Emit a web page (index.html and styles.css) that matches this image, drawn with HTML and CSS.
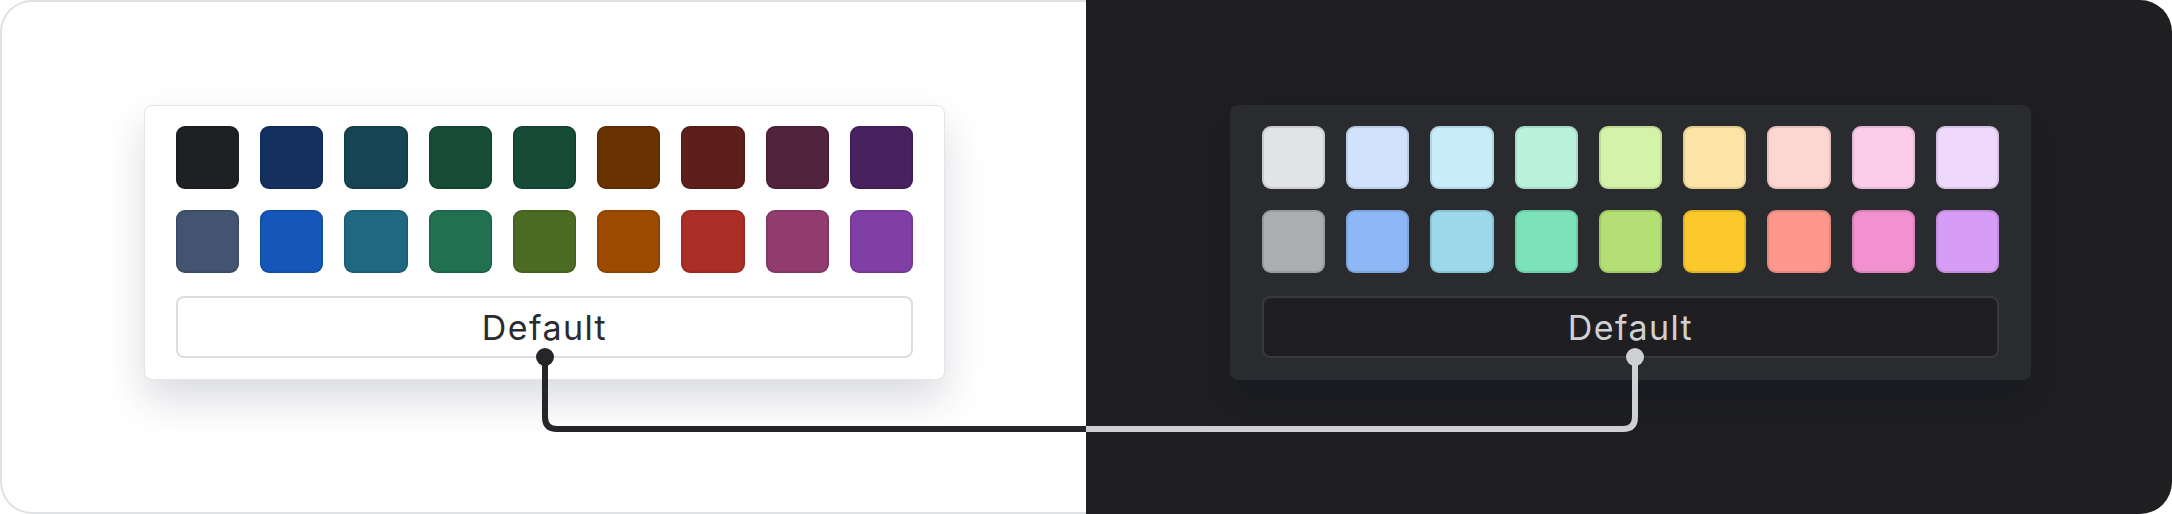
FILE: index.html
```html
<!DOCTYPE html>
<html lang="en">
<head>
    <meta charset="UTF-8">
    <meta name="viewport" content="width=device-width, initial-scale=1.0">
    <title>Color Picker - Themes</title>
    <link rel="stylesheet" href="styles.css">
</head>
<body>
    <div class="showcase">
        <!-- Light theme -->
        <div class="pane pane-light">
            <div class="picker">
                <div class="swatches">
                    <span class="swatch" style="background:#1f2023"></span>
                    <span class="swatch" style="background:#13305f"></span>
                    <span class="swatch" style="background:#164452"></span>
                    <span class="swatch" style="background:#174c36"></span>
                    <span class="swatch" style="background:#154b37"></span>
                    <span class="swatch" style="background:#6a3200"></span>
                    <span class="swatch" style="background:#5e1f1c"></span>
                    <span class="swatch" style="background:#52233f"></span>
                    <span class="swatch" style="background:#48225f"></span>

                    <span class="swatch" style="background:#435470"></span>
                    <span class="swatch" style="background:#1557b8"></span>
                    <span class="swatch" style="background:#206780"></span>
                    <span class="swatch" style="background:#217050"></span>
                    <span class="swatch" style="background:#4b6b22"></span>
                    <span class="swatch" style="background:#9c4a00"></span>
                    <span class="swatch" style="background:#aa2e25"></span>
                    <span class="swatch" style="background:#913b6f"></span>
                    <span class="swatch" style="background:#7f3fa5"></span>
                </div>
                <button class="default-btn">Default</button>
            </div>
        </div>

        <!-- Dark theme -->
        <div class="pane pane-dark">
            <div class="picker">
                <div class="swatches">
                    <span class="swatch" style="background:#e2e3e5"></span>
                    <span class="swatch" style="background:#d1e2fd"></span>
                    <span class="swatch" style="background:#c7ecfa"></span>
                    <span class="swatch" style="background:#baf2db"></span>
                    <span class="swatch" style="background:#d4f2a8"></span>
                    <span class="swatch" style="background:#fbe4a5"></span>
                    <span class="swatch" style="background:#fdd6d2"></span>
                    <span class="swatch" style="background:#fccdeb"></span>
                    <span class="swatch" style="background:#eed8fc"></span>

                    <span class="swatch" style="background:#abadb1"></span>
                    <span class="swatch" style="background:#8db8f5"></span>
                    <span class="swatch" style="background:#9bd8ea"></span>
                    <span class="swatch" style="background:#7be2b9"></span>
                    <span class="swatch" style="background:#b3df74"></span>
                    <span class="swatch" style="background:#fbc92b"></span>
                    <span class="swatch" style="background:#fd978d"></span>
                    <span class="swatch" style="background:#f291d0"></span>
                    <span class="swatch" style="background:#d79cf5"></span>
                </div>
                <button class="default-btn">Default</button>
            </div>
        </div>

        <!-- Connector between the two Default buttons -->
        <svg class="connector" width="2172" height="514" viewBox="0 0 2172 514">
            <path d="M545 357 V417 Q545 429 557 429 H1086" fill="none" stroke="#25262a" stroke-width="6"/>
            <path d="M1086 429 H1623 Q1635 429 1635 417 V357" fill="none" stroke="#cfd0d4" stroke-width="6"/>
            <circle cx="545" cy="357" r="9" fill="#25262a"/>
            <circle cx="1635" cy="357" r="9" fill="#cfd0d4"/>
        </svg>
    </div>
</body>
</html>
```

FILE: styles.css
```css
body {
    margin: 0;
    background-color: #fff;
    font-family: Inter, "Noto Sans", Arial, sans-serif;
}

.showcase {
    position: relative;
    display: flex;
    width: 2172px;
    height: 514px;
}

.pane {
    box-sizing: border-box;
    height: 514px;
}

.pane-light {
    flex: 0 0 1086px;
    background-color: #fff;
    border: 2px solid #e0e1e5;
    border-right: none;
    border-radius: 32px 0 0 32px;
    padding: 103px 0 0 142px;
}

.pane-dark {
    flex: 1;
    background-color: #1f1f21;
    border-radius: 0 32px 32px 0;
    padding: 105px 0 0 144px;
}

.picker {
    box-sizing: border-box;
    width: 801px;
    border-radius: 8px;
}

.pane-light .picker {
    background-color: #fff;
    border: 1px solid #e3e4e8;
    padding: 20px 31px 21px;
    box-shadow: 0 20px 40px rgba(30, 35, 60, 0.16);
}

.pane-dark .picker {
    background-color: #2a2b2f;
    padding: 21px 32px 22px;
    box-shadow: 0 20px 40px rgba(10, 15, 35, 0.3);
}

.swatches {
    display: grid;
    grid-template-columns: repeat(9, 1fr);
    gap: 21px;
}

.swatch {
    display: block;
    height: 63px;
    border-radius: 9px;
    box-shadow: inset 0 0 0 1.5px rgba(0, 0, 0, 0.12);
}

.pane-dark .swatch {
    box-shadow: inset 0 0 0 2px rgba(0, 0, 0, 0.1);
}

.default-btn {
    display: block;
    box-sizing: border-box;
    width: 100%;
    height: 62px;
    margin-top: 23px;
    border-radius: 8px;
    font-family: inherit;
    font-size: 34px;
    letter-spacing: 1.4px;
    padding: 0;
    cursor: pointer;
}

.pane-light .default-btn {
    background-color: #fff;
    border: 2px solid #dcdde1;
    color: #2a2b2f;
}

.pane-dark .default-btn {
    background-color: #1f1f21;
    border: 2px solid #38393d;
    color: #d0d0d4;
}

.connector {
    position: absolute;
    top: 0;
    left: 0;
    pointer-events: none;
}
```
